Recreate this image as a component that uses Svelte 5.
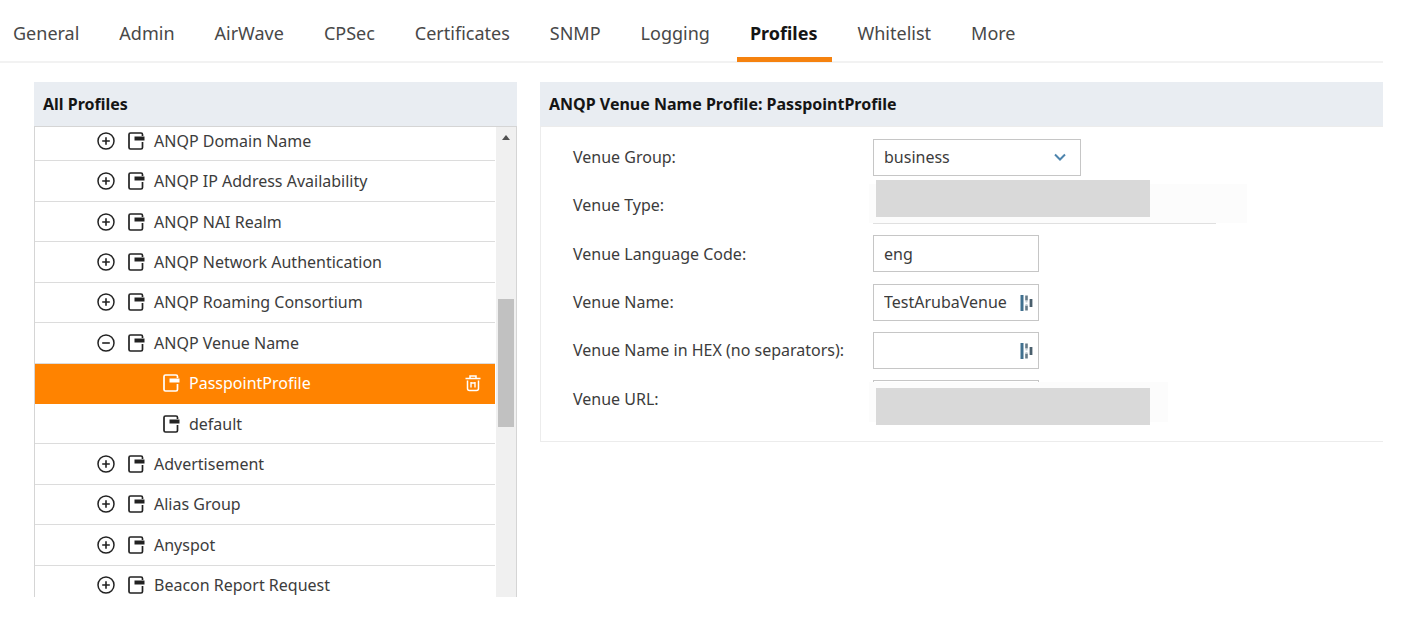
<script>
  const tabs = ['General', 'Admin', 'AirWave', 'CPSec', 'Certificates', 'SNMP', 'Logging', 'Profiles', 'Whitelist', 'More'];
  let activeTab = $state('Profiles');

  const profiles = [
    { name: 'ANQP Domain Name' },
    { name: 'ANQP IP Address Availability' },
    { name: 'ANQP NAI Realm' },
    { name: 'ANQP Network Authentication' },
    { name: 'ANQP Roaming Consortium' },
    { name: 'ANQP Venue Name', open: true },
    { name: 'PasspointProfile', child: true },
    { name: 'default', child: true },
    { name: 'Advertisement' },
    { name: 'Alias Group' },
    { name: 'Anyspot' },
    { name: 'Beacon Report Request' }
  ];
  let selected = $state('PasspointProfile');

  let venueGroup = $state('business');
  let language = $state('eng');
  let venueName = $state('TestArubaVenue');
  let venueHex = $state('');
</script>

{#snippet fillIcon()}
  <svg class="fill-icon" viewBox="0 0 14 18" aria-hidden="true">
    <path d="M2 1v16" stroke="#40708f" stroke-width="3" />
    <path d="M6.500 1.500v5M6.500 11.500v5" stroke="#667a87" stroke-width="2.600" />
    <path d="M6.500 7v1.500M6.500 10v1.500" stroke="#c3ced6" stroke-width="2" />
    <path d="M11 5v8" stroke="#4a5f6d" stroke-width="2.800" />
  </svg>
{/snippet}

<nav class="tabs" aria-label="System">
  {#each tabs as tab}
    <a href="#{tab}" class="tab" class:active={tab === activeTab} onclick={() => (activeTab = tab)}>{tab}</a>
  {/each}
</nav>

<main class="columns">
  <section class="panel">
    <h2>All Profiles</h2>
    <div class="tree-view">
      <ul class="tree">
        {#each profiles as p}
          <li class:child={p.child} class:selected={p.name === selected}>
            {#if !p.child}
              <button class="toggle" aria-label="Toggle {p.name}">
                <svg viewBox="0 0 18 18" width="18" height="18" aria-hidden="true">
                  <circle cx="9" cy="9" r="8" fill="none" stroke="currentColor" stroke-width="1.5" />
                  <path d={p.open ? 'M5.2 9h7.6' : 'M5.2 9h7.6M9 5.2v7.6'} stroke="currentColor" stroke-width="1.6" />
                </svg>
              </button>
            {/if}
            <button class="name" onclick={() => (selected = p.name)}>
              <svg viewBox="0 0 17 18" width="17" height="18" aria-hidden="true">
                <path d="M14.500 4V2.500Q14.500 1 13 1H2.500Q1 1 1 2.500V15.500Q1 17 2.500 17H13Q14.500 17 14.500 15.500V10" fill="none" stroke="currentColor" stroke-width="1.700" />
                <path d="M6.500 4.500H16.500V8.500H6.500Z" fill="currentColor" />
              </svg>
              <span>{p.name}</span>
            </button>
            {#if p.name === selected}
              <button class="delete" aria-label="Delete {p.name}">
                <svg viewBox="0 0 16 18" width="16" height="18" fill="none" stroke="currentColor" aria-hidden="true">
                  <path d="M0.500 4.500h15M5 4V2h6v2" stroke-width="1.500" />
                  <path d="M2.500 6.500V14.500Q2.500 16.500 4.500 16.500H11.500Q13.500 16.500 13.500 14.500V6.500" stroke-width="1.500" />
                  <path d="M6 8v5.500M10 8v5.500M6 9h4" stroke-width="1.400" />
                </svg>
              </button>
            {/if}
          </li>
        {/each}
      </ul>
      <div class="scrollbar" aria-hidden="true">
        <span class="arrow"></span>
        <span class="thumb"></span>
      </div>
    </div>
  </section>

  <section class="panel">
    <h2>ANQP Venue Name Profile: PasspointProfile</h2>
    <form class="fields">
      <label for="group">Venue Group:</label>
      <div class="control select">
        <select id="group" bind:value={venueGroup}>
          <option>business</option>
        </select>
        <svg class="chevron" viewBox="0 0 12 8" aria-hidden="true">
          <path d="M1 1.500L6 6.500L11 1.500" fill="none" stroke="#4d84ad" stroke-width="2" />
        </svg>
      </div>

      <span>Venue Type:</span>
      <div class="control type"><div class="haze"></div><div class="block"></div></div>

      <label for="language">Venue Language Code:</label>
      <div class="control"><input id="language" type="text" bind:value={language} /></div>

      <label for="name">Venue Name:</label>
      <div class="control"><input id="name" type="text" bind:value={venueName} />{@render fillIcon()}</div>

      <label for="hex">Venue Name in HEX (no separators):</label>
      <div class="control"><input id="hex" type="text" bind:value={venueHex} />{@render fillIcon()}</div>

      <label for="url">Venue URL:</label>
      <div class="control url">
        <input id="url" type="text" />
        <div class="haze"></div>
        <div class="block"></div>
      </div>
    </form>
  </section>
</main>

<style>
  :global(body) {
    margin: 0;
    background: #fff;
    font-family: 'Noto Sans', 'Open Sans', sans-serif;
    font-size: 16px;
    color: #3c3c3c;
  }
  button {
    display: flex;
    align-items: center;
    padding: 0;
    border: 0;
    background: none;
    font: inherit;
    color: inherit;
    cursor: pointer;
  }
  .tabs {
    display: flex;
    gap: 12px;
    margin-right: 37px;
    padding-top: 6px;
    border-bottom: 2px solid #f2f2f2;
  }
  .tab {
    height: 51px;
    margin-bottom: -1px;
    padding: 0 15px 0 13px;
    border-bottom: 5px solid transparent;
    font-size: 18px;
    line-height: 54px;
    color: #484848;
    text-decoration: none;
  }
  .tab.active {
    border-color: #f5820f;
    font-weight: 700;
    color: #151515;
  }
  .columns {
    display: grid;
    grid-template-columns: 483fr 843fr;
    align-items: start;
    gap: 23px;
    padding: 19px 37px 0 34px;
  }
  .panel {
    min-width: 0;
  }
  h2 {
    box-sizing: border-box;
    height: 44px;
    margin: 0;
    padding-left: 9px;
    background: #e9edf2;
    font-size: 16px;
    line-height: 44px;
    color: #151515;
    white-space: nowrap;
  }
  .tree-view {
    display: flex;
    height: 470px;
    overflow: hidden;
    border: 1px solid #d5d5d5;
    border-bottom: 0;
  }
  .tree {
    flex: 1;
    display: grid;
    grid-template-rows: repeat(12, 1fr);
    height: 485px;
    margin: -6px 0 0;
    padding: 0;
    list-style: none;
  }
  li {
    display: flex;
    align-items: center;
    gap: 13px;
    padding: 0 14px 0 62px;
    border-bottom: 1px solid #dcdcdc;
  }
  li.child {
    padding-left: 128px;
  }
  li.selected {
    background: #ff8300;
    border-color: #ff8300;
    color: #fff;
  }
  .toggle,
  .name svg {
    color: #222;
  }
  .selected .name svg {
    color: #fff;
  }
  .name {
    flex: 1;
    gap: 9px;
  }
  .scrollbar {
    position: relative;
    width: 20px;
    margin-left: 1px;
    background: #f0f0f0;
  }
  .arrow {
    position: absolute;
    top: 8px;
    left: 6px;
    border: 4px solid transparent;
    border-top: 0;
    border-bottom: 5px solid #505050;
  }
  .thumb {
    position: absolute;
    top: 172px;
    left: 2px;
    width: 16px;
    height: 128px;
    background: #c1c1c1;
  }
  .fields {
    display: grid;
    grid-template-columns: 300px 1fr;
    grid-template-rows: repeat(6, 1fr);
    align-items: center;
    height: 290px;
    padding: 6px 0 18px 32px;
    border: 1px solid #ececec;
    border-right: 0;
  }
  .fields > label,
  .fields > span {
    white-space: nowrap;
  }
  .control {
    position: relative;
    width: 166px;
    height: 37px;
  }
  .control.select {
    width: 208px;
  }
  input,
  select {
    box-sizing: border-box;
    width: 100%;
    height: 37px;
    margin: 0;
    padding: 0 10px;
    border: 1px solid #c6c6c6;
    border-radius: 0;
    background: #fff;
    font: inherit;
    color: #3c3c3c;
    appearance: none;
  }
  .chevron {
    position: absolute;
    top: 14px;
    right: 15px;
    width: 12px;
    height: 8px;
    pointer-events: none;
  }
  .fill-icon {
    position: absolute;
    top: 10px;
    right: 5px;
    width: 14px;
    height: 18px;
  }
  .control.type {
    box-sizing: border-box;
    width: 343px;
    border-bottom: 1px solid #e0e0e0;
  }
  .haze,
  .block {
    position: absolute;
  }
  .haze {
    left: -4px;
    background: #fcfcfc;
  }
  .type .haze {
    top: -3px;
    width: 378px;
    height: 39px;
  }
  .url .haze {
    top: 2px;
    width: 299px;
    height: 40px;
  }
  .block {
    left: 3px;
    width: 274px;
    height: 37px;
    background: #d9d9d9;
  }
  .type .block {
    top: -7px;
  }
  .url .block {
    top: 8px;
  }
</style>
